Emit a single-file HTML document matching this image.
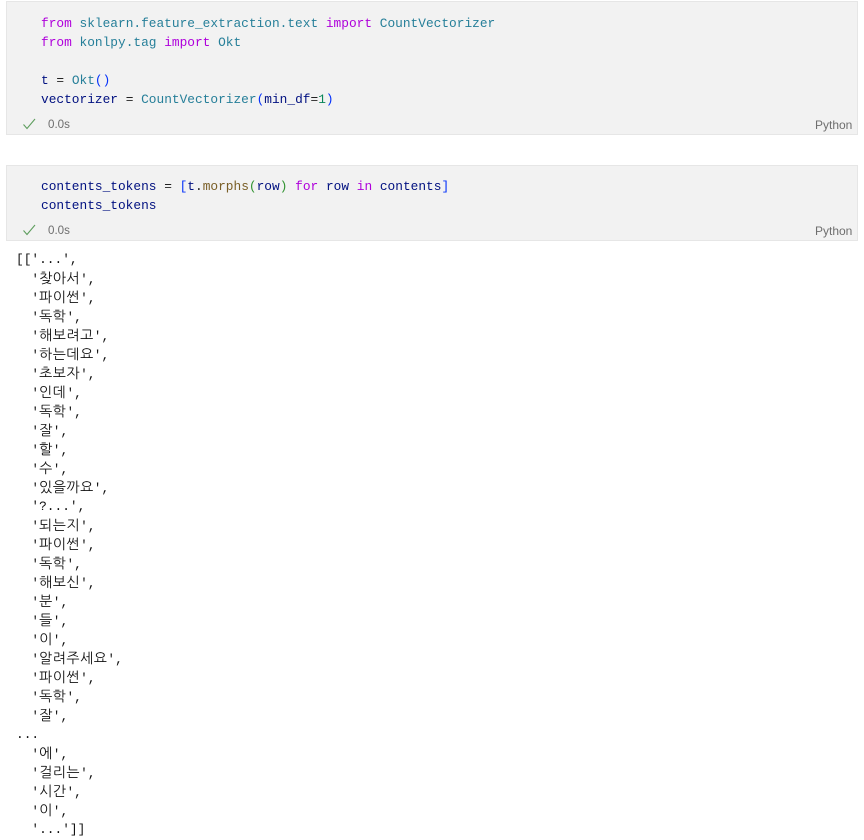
<!DOCTYPE html>
<html lang="ko">
<head>
<meta charset="utf-8">
<title>Notebook</title>
<style>
html,body{margin:0;padding:0;background:#fff}
body{width:864px;height:840px;position:relative;overflow:hidden}
.cell{position:absolute;left:6px;width:850px;background:#f2f2f2;border:1px solid #e6e6e6}
.l{position:absolute;white-space:pre;font-family:"Liberation Mono","DejaVu Sans Mono",monospace;font-size:12.83px;line-height:19px;height:19px;color:#000}
.s{position:absolute;font-family:"Liberation Sans",sans-serif;font-size:11.6px;line-height:16px;color:#6e6e6e}
.p{font-size:12px}
.k{color:#af00db}.c{color:#267f99}.v{color:#001080}.b{color:#0431fa}.n{color:#098658}.f{color:#795e26}.g{color:#319331}.d{color:#222}
.o{color:#111}
.o i{font-style:normal;font-family:"NanumGothic","Noto Sans CJK KR",sans-serif;font-size:14px;line-height:19px;letter-spacing:.5px}
.o:has(i){margin-top:1px}
svg{position:absolute}
</style>
</head>
<body>
<div class="cell" style="top:1px;height:132px"></div>
<div class="cell" style="top:165px;height:74px"></div>

<div class="l" style="left:41px;top:14px"><span class="k">from</span> <span class="c">sklearn.feature_extraction.text</span> <span class="k">import</span> <span class="c">CountVectorizer</span></div>
<div class="l" style="left:41px;top:33px"><span class="k">from</span> <span class="c">konlpy.tag</span> <span class="k">import</span> <span class="c">Okt</span></div>
<div class="l" style="left:41px;top:71px"><span class="v">t</span> <span class="d">=</span> <span class="c">Okt</span><span class="b">()</span></div>
<div class="l" style="left:41px;top:90px"><span class="v">vectorizer</span> <span class="d">=</span> <span class="c">CountVectorizer</span><span class="b">(</span><span class="v">min_df</span><span class="d">=</span><span class="n">1</span><span class="b">)</span></div>
<svg style="left:22px;top:118px" width="14" height="12" viewBox="0 0 14 12"><path d="M1.5 6.5L5 10.5L13 1" fill="none" stroke="#5f9e5f" stroke-width="1.1"/></svg>
<div class="s" style="left:48px;top:117px">0.0s</div>
<div class="s p" style="left:815px;top:117px">Python</div>

<div class="l" style="left:41px;top:177px"><span class="v">contents_tokens</span> <span class="d">=</span> <span class="b">[</span><span class="v">t</span><span class="d">.</span><span class="f">morphs</span><span class="g">(</span><span class="v">row</span><span class="g">)</span> <span class="k">for</span> <span class="v">row</span> <span class="k">in</span> <span class="v">contents</span><span class="b">]</span></div>
<div class="l" style="left:41px;top:196px"><span class="v">contents_tokens</span></div>
<svg style="left:22px;top:224px" width="14" height="12" viewBox="0 0 14 12"><path d="M1.5 6.5L5 10.5L13 1" fill="none" stroke="#5f9e5f" stroke-width="1.1"/></svg>
<div class="s" style="left:48px;top:223px">0.0s</div>
<div class="s p" style="left:815px;top:223px">Python</div>

<div class="l o" style="left:16px;top:250px">[['...',</div>
<div class="l o" style="left:16px;top:269px">  '<i>찾아서</i>',</div>
<div class="l o" style="left:16px;top:288px">  '<i>파이썬</i>',</div>
<div class="l o" style="left:16px;top:307px">  '<i>독학</i>',</div>
<div class="l o" style="left:16px;top:326px">  '<i>해보려고</i>',</div>
<div class="l o" style="left:16px;top:345px">  '<i>하는데요</i>',</div>
<div class="l o" style="left:16px;top:364px">  '<i>초보자</i>',</div>
<div class="l o" style="left:16px;top:383px">  '<i>인데</i>',</div>
<div class="l o" style="left:16px;top:402px">  '<i>독학</i>',</div>
<div class="l o" style="left:16px;top:421px">  '<i>잘</i>',</div>
<div class="l o" style="left:16px;top:440px">  '<i>할</i>',</div>
<div class="l o" style="left:16px;top:459px">  '<i>수</i>',</div>
<div class="l o" style="left:16px;top:478px">  '<i>있을까요</i>',</div>
<div class="l o" style="left:16px;top:497px">  '?...',</div>
<div class="l o" style="left:16px;top:516px">  '<i>되는지</i>',</div>
<div class="l o" style="left:16px;top:535px">  '<i>파이썬</i>',</div>
<div class="l o" style="left:16px;top:554px">  '<i>독학</i>',</div>
<div class="l o" style="left:16px;top:573px">  '<i>해보신</i>',</div>
<div class="l o" style="left:16px;top:592px">  '<i>분</i>',</div>
<div class="l o" style="left:16px;top:611px">  '<i>들</i>',</div>
<div class="l o" style="left:16px;top:630px">  '<i>이</i>',</div>
<div class="l o" style="left:16px;top:649px">  '<i>알려주세요</i>',</div>
<div class="l o" style="left:16px;top:668px">  '<i>파이썬</i>',</div>
<div class="l o" style="left:16px;top:687px">  '<i>독학</i>',</div>
<div class="l o" style="left:16px;top:706px">  '<i>잘</i>',</div>
<div class="l o" style="left:16px;top:725px">...</div>
<div class="l o" style="left:16px;top:744px">  '<i>에</i>',</div>
<div class="l o" style="left:16px;top:763px">  '<i>걸리는</i>',</div>
<div class="l o" style="left:16px;top:782px">  '<i>시간</i>',</div>
<div class="l o" style="left:16px;top:801px">  '<i>이</i>',</div>
<div class="l o" style="left:16px;top:820px">  '...']]</div>
</body>
</html>
